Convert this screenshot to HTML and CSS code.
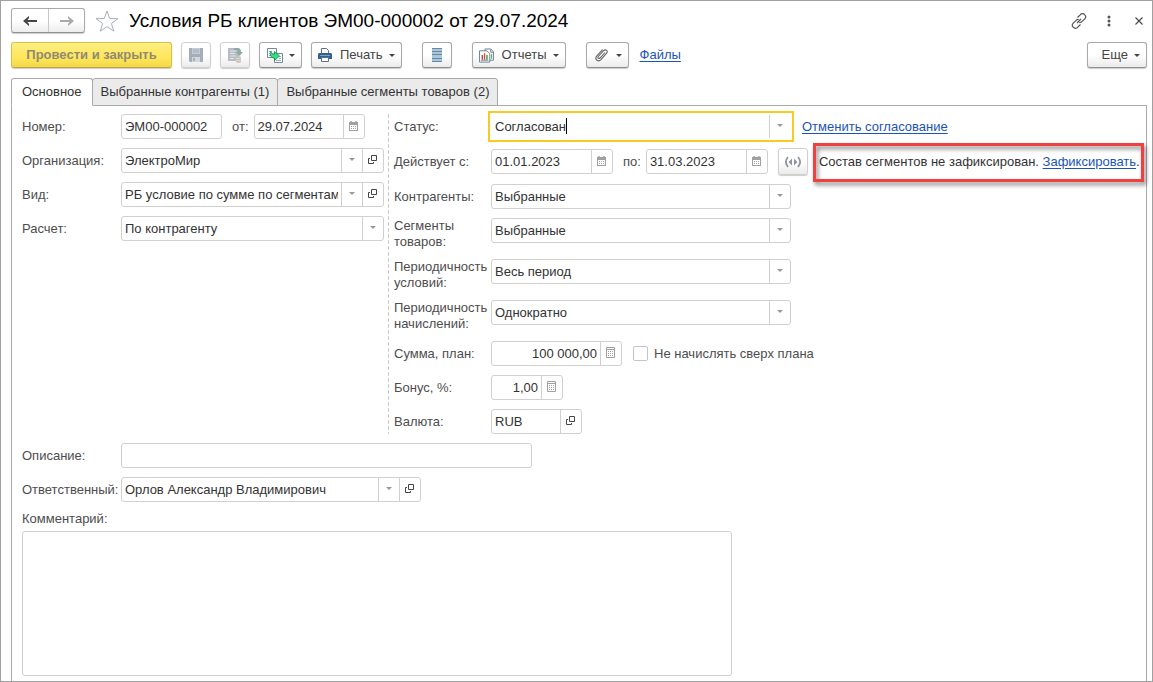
FILE: index.html
```
<!DOCTYPE html>
<html lang="ru">

<head>
    <meta charset="UTF-8">
    <meta name="viewport" content="width=device-width, initial-scale=1.0">
    <title>Условия РБ клиентов ЭМ00-000002 от 29.07.2024</title>
    <link rel="stylesheet" href="styles.css">
</head>

<body>
    <!-- общие иконки полей -->
    <svg class="sprite" aria-hidden="true">
        <symbol id="i-calendar" viewBox="0 0 9 10">
            <path d="M0 1h9v9H0z" fill="#a0a0a0" />
            <path d="M1 4h7v5H1z" fill="#fff" />
            <path d="M2 0v2M7 0v2" stroke="#a0a0a0" stroke-width="1.4" />
            <path d="M2 5.5h5M2 7.5h5" stroke="#a0a0a0" stroke-dasharray="1 1" />
        </symbol>
        <symbol id="i-calc" viewBox="0 0 9 11">
            <path d="M.5.5h8v10h-8z" fill="#fff" stroke="#a0a0a0" />
            <path d="M1 2.5h7" stroke="#a0a0a0" />
            <path d="M2 4.5h5M2 6.5h5M2 8.5h5" stroke="#a0a0a0" stroke-dasharray="1 1" />
        </symbol>
        <symbol id="i-open" viewBox="0 0 9 9">
            <path d="M3.5.5h5v5h-5zM2 3.5H.5v5h5V7" fill="none" stroke="#444" />
        </symbol>
    </svg>

    <div class="window">
        <header class="titlebar">
            <div class="nav">
                <button type="button" aria-label="Назад"><svg width="14" height="10" viewBox="0 0 14 10"><path d="M6 0v2L4.500 4H14v2H4.500L6 8v2L0 5z" fill="#444" /></svg></button>
                <button type="button" aria-label="Вперед" disabled><svg width="14" height="10" viewBox="0 0 14 10"><path d="M8 0v2l1.500 2H0v2h9.500L8 8v2l6-5z" fill="#aaa" /></svg></button>
            </div>
            <button type="button" class="plain star" aria-label="Избранное"><svg width="24" height="22" viewBox="0 0 24 22"><path d="M12 1l2.700 7.500 8.300.2-6.600 4.800 2.400 7.700L12 16.600l-6.800 4.600 2.400-7.700L1 8.700l8.300-.2z" fill="#fff" stroke="#a9b0ba" /></svg></button>
            <h1>Условия РБ клиентов ЭМ00-000002 от 29.07.2024</h1>
            <div class="tools">
                <button type="button" class="plain" aria-label="Получить ссылку"><svg width="16" height="16" viewBox="0 0 16 16" fill="none" stroke="#555" stroke-width="1.200"><path d="M6.500 4.500l2.700-2.700a2.900 2.900 0 0 1 4.600 0 2.900 2.900 0 0 1 0 4l-2.900 2.900a2.900 2.900 0 0 1-2.600.8M9.500 11.500l-2.700 2.700a2.900 2.900 0 0 1-4.600 0 2.900 2.900 0 0 1 0-4l2.900-2.900a2.900 2.900 0 0 1 2.600-.8M6 10l4-4" /></svg></button>
                <button type="button" class="plain" aria-label="Меню"><svg width="4" height="12" viewBox="0 0 4 12" fill="#555"><circle cx="2" cy="2" r="1.500" /><circle cx="2" cy="6" r="1.500" /><circle cx="2" cy="10" r="1.500" /></svg></button>
                <button type="button" class="plain" aria-label="Закрыть"><svg width="8" height="8" viewBox="0 0 8 8"><path d="M.5.5l7 7M7.500.5l-7 7" stroke="#444" stroke-width="1.100" /></svg></button>
            </div>
        </header>

        <div class="toolbar">
            <button type="button" class="btn btn-main">Провести и закрыть</button>
            <button type="button" class="btn btn-icon" aria-label="Записать" disabled><svg width="14" height="14" viewBox="0 0 14 14"><path d="M0 0h14v14H1l-1-1z" fill="#a4adb8" /><path d="M3 0h8v6H3z" fill="#c4ccd4" /><path d="M4 2h6M4 4h6" stroke="#a4adb8" /><path d="M3 9h8v5H3z" fill="#d3d8dd" /><path d="M4 10h2v3H4z" fill="#a4adb8" /></svg></button>
            <button type="button" class="btn btn-icon" aria-label="Провести" disabled><svg width="16" height="17" viewBox="0 0 16 17"><path d="M1 1h11v13H1z" fill="#b5bcc3" /><path d="M3 4h6M3 6.500h5M3 9h6M3 11.500h4" stroke="#e2e5e8" /><path d="M7 1h3c3 0 4 1 4 4h2l-3.500 4L9 5h2c0-2-1-2-4-2z" fill="#8faaa0" /><path d="M9 10c0-1 5-1 5 0v5c0 1-5 1-5 0z" fill="#c9c3b4" /><path d="M9 11.500h5M9 13.500h5" stroke="#ddd8cc" /></svg></button>
            <button type="button" class="btn" aria-label="Создать на основании"><svg width="17" height="17" viewBox="0 0 17 17"><path d="M1.500 1.500h9v9h-9z" fill="#fff" stroke="#74879b" /><path d="M3 4.500h2M3 6.500h1M3 8.500h2" stroke="#9aa8b6" /><path d="M8.500 6.500h8v9h-8z" fill="#fff" stroke="#74879b" /><path d="M10 13.500h5M13 11.500h2M13 9.500h2" stroke="#9aa8b6" /><path d="M5 4c0 2 1 3 3.500 3V4.500l5 4.500-5 4.500V11C5 11 3.500 8 5 4z" fill="#2fe07f" stroke="#13864a" stroke-width=".8" /></svg><i class="caret"></i></button>
            <button type="button" class="btn"><svg width="14" height="14" viewBox="0 0 14 14"><path d="M3.500.5h5l2 2V6h-7z" fill="#fff" stroke="#5d7183" /><path d="M1 5h12l1 1v5H0V6z" fill="#32628f" /><path d="M2 7.500h10" stroke="#7ea3c4" /><path d="M3.500 9.500h7v4h-7z" fill="#fff" stroke="#5d7183" /></svg><span>Печать</span><i class="caret"></i></button>
            <button type="button" class="btn btn-icon group" aria-label="Движения документа"><svg width="10" height="14" viewBox="0 0 10 14"><path d="M0 0h10v14H0z" fill="#a9c6da" /><path d="M0 .5h10M0 3.500h10M0 6.500h10M0 10.500h10M0 13.500h10" stroke="#6688a3" /></svg></button>
            <button type="button" class="btn group"><svg width="15" height="15" viewBox="0 0 16 15"><path d="M6.500.5h6l3 3v9h-9z" fill="#fff" stroke="#687d90" /><path d="M12.500 1v3h3" fill="none" stroke="#687d90" /><path d="M13.500 6v5" stroke="#2aa04a" /><path d="M.5 2.500h8l3 3v9H.5z" fill="#fff" stroke="#687d90" /><path d="M3.500 7v5" stroke="#d8412f" stroke-width="1.500" /><path d="M6 5v7" stroke="#d8412f" stroke-width="1.300" /><path d="M8.500 7v5" stroke="#2aa04a" stroke-width="1.500" /><path d="M2 12.500h8" stroke="#687d90" /></svg><span>Отчеты</span><i class="caret"></i></button>
            <button type="button" class="btn group" aria-label="Присоединенные файлы"><svg width="17" height="14" viewBox="0 0 13 14" fill="none" stroke="#666" stroke-width="1.100"><path d="M10 4.500l-5 5.500c-1.300 1.300-2.800-.2-1.700-1.500l5.300-5.800c2-2 4.800.2 3 2.500L6 11.700c-2.800 2.800-6.800-.2-4.300-3.500L7.500 1.700" /></svg><i class="caret"></i></button>
            <a href="#">Файлы</a>
            <button type="button" class="btn more"><span>Еще</span><i class="caret"></i></button>
        </div>

        <div class="tabs" role="tablist">
            <button type="button" role="tab" class="tab active" aria-selected="true">Основное</button>
            <button type="button" role="tab" class="tab">Выбранные контрагенты (1)</button>
            <button type="button" role="tab" class="tab">Выбранные сегменты товаров (2)</button>
        </div>

        <main class="panel">
            <div class="columns">
                <div class="col col-left">
                    <div class="row">
                        <label for="number">Номер:</label>
                        <div class="field w-number"><input type="text" id="number" value="ЭМ00-000002"></div>
                        <label class="inline" for="date">от:</label>
                        <div class="field w-date"><input type="text" id="date" value="29.07.2024"><button type="button" class="cell" aria-label="Выбрать дату"><svg width="9" height="10"><use href="#i-calendar" /></svg></button></div>
                    </div>
                    <div class="row">
                        <label for="org">Организация:</label>
                        <div class="field grow"><select id="org"><option>ЭлектроМир</option></select><span class="cell drop"></span><button type="button" class="cell" aria-label="Открыть"><svg width="9" height="9"><use href="#i-open" /></svg></button></div>
                    </div>
                    <div class="row">
                        <label for="kind">Вид:</label>
                        <div class="field grow"><select id="kind"><option>РБ условие по сумме по сегментам</option></select><span class="cell drop"></span><button type="button" class="cell" aria-label="Открыть"><svg width="9" height="9"><use href="#i-open" /></svg></button></div>
                    </div>
                    <div class="row">
                        <label for="calc">Расчет:</label>
                        <div class="field grow"><select id="calc"><option>По контрагенту</option></select><span class="cell drop"></span></div>
                    </div>
                </div>

                <div class="col col-right">
                    <div class="row">
                        <label for="status">Статус:</label>
                        <div class="field w-select focused"><select id="status"><option>Согласован</option></select><span class="text-cursor"></span><span class="cell drop"></span></div>
                        <a class="after" href="#">Отменить согласование</a>
                    </div>
                    <div class="row row-period">
                        <label for="from">Действует с:</label>
                        <div class="field w-period"><input type="text" id="from" value="01.01.2023"><button type="button" class="cell" aria-label="Выбрать дату"><svg width="9" height="10"><use href="#i-calendar" /></svg></button></div>
                        <label class="inline" for="to">по:</label>
                        <div class="field w-period"><input type="text" id="to" value="31.03.2023"><button type="button" class="cell" aria-label="Выбрать дату"><svg width="9" height="10"><use href="#i-calendar" /></svg></button></div>
                        <button type="button" class="btn btn-period" aria-label="Выбрать период"><svg width="16" height="12" viewBox="0 0 16 12"><path d="M3 1c-2.500 3-2.500 7 0 10M13 1c2.500 3 2.500 7 0 10" fill="none" stroke="#8e979f" stroke-width="1.800" /><path d="M7 2.500v7L3.500 6zM9 2.500v7L12.500 6z" fill="#8e979f" /></svg></button>
                        <p class="notice">Состав сегментов не зафиксирован. <a href="#">Зафиксировать</a>.</p>
                    </div>
                    <div class="row">
                        <label for="partners">Контрагенты:</label>
                        <div class="field w-select"><select id="partners"><option>Выбранные</option></select><span class="cell drop"></span></div>
                    </div>
                    <div class="row">
                        <label for="segments">Сегменты товаров:</label>
                        <div class="field w-select"><select id="segments"><option>Выбранные</option></select><span class="cell drop"></span></div>
                    </div>
                    <div class="row">
                        <label for="terms">Периодичность условий:</label>
                        <div class="field w-select"><select id="terms"><option>Весь период</option></select><span class="cell drop"></span></div>
                    </div>
                    <div class="row">
                        <label for="accruals">Периодичность начислений:</label>
                        <div class="field w-select"><select id="accruals"><option>Однократно</option></select><span class="cell drop"></span></div>
                    </div>
                    <div class="row">
                        <label for="sum">Сумма, план:</label>
                        <div class="field w-sum"><input type="text" class="num" id="sum" value="100 000,00"><button type="button" class="cell" aria-label="Калькулятор"><svg width="9" height="11"><use href="#i-calc" /></svg></button></div>
                        <label class="check"><input type="checkbox">Не начислять сверх плана</label>
                    </div>
                    <div class="row">
                        <label for="bonus">Бонус, %:</label>
                        <div class="field w-bonus"><input type="text" class="num" id="bonus" value="1,00"><button type="button" class="cell" aria-label="Калькулятор"><svg width="9" height="11"><use href="#i-calc" /></svg></button></div>
                    </div>
                    <div class="row">
                        <label for="currency">Валюта:</label>
                        <div class="field w-currency"><input type="text" id="currency" value="RUB"><button type="button" class="cell" aria-label="Открыть"><svg width="9" height="9"><use href="#i-open" /></svg></button></div>
                    </div>
                </div>
            </div>

            <div class="row">
                <label for="description">Описание:</label>
                <div class="field w-description"><input type="text" id="description"></div>
            </div>
            <div class="row">
                <label for="manager">Ответственный:</label>
                <div class="field w-select"><select id="manager"><option>Орлов Александр Владимирович</option></select><span class="cell drop"></span><button type="button" class="cell" aria-label="Открыть"><svg width="9" height="9"><use href="#i-open" /></svg></button></div>
            </div>
            <div class="comment">
                <label for="comment">Комментарий:</label>
                <textarea id="comment"></textarea>
            </div>
        </main>
    </div>
</body>

</html>
```
FILE: styles.css
```
* {
    box-sizing: border-box;
}

body {
    margin: 0;
    background: #fff;
    color: #333;
    font-family: "Liberation Sans", Arial, sans-serif;
    font-size: 13px;
    line-height: 16px;
}

button,
input,
select,
textarea {
    font: inherit;
    color: inherit;
    margin: 0;
    padding: 0;
    border: 0;
    outline: none;
    background: none;
}

svg {
    display: block;
    flex: none;
}

a {
    color: #1a54b8;
    text-underline-offset: 2px;
}

.sprite {
    display: none;
}

.window {
    display: flex;
    flex-direction: column;
    min-height: 100vh;
    padding: 7px 5px 0 10px;
    border: 1px solid #a0a0a0;
}

/* заголовок */
.titlebar {
    display: flex;
    align-items: center;
    height: 25px;
}

.titlebar h1 {
    flex: 1;
    margin: 0;
    font-size: 19px;
    line-height: 24px;
    font-weight: normal;
    color: #000;
    white-space: nowrap;
}

.nav {
    display: flex;
    height: 25px;
    border: 1px solid #a9a9a9;
    border-bottom-color: #8f8f8f;
    border-radius: 3px;
    background: linear-gradient(#fff 50%, #ededed);
    box-shadow: 0 1px 1px #ccc;
}

.nav button {
    display: flex;
    align-items: center;
    justify-content: center;
    width: 36px;
}

.nav button + button {
    border-left: 1px solid #c8c8c8;
}

.plain {
    display: flex;
    align-items: center;
    justify-content: center;
}

.star {
    margin: 0 10px;
}

.tools {
    display: flex;
    align-items: center;
    gap: 14px;
}

.tools button {
    width: 16px;
}

/* командная панель */
.toolbar {
    display: flex;
    align-items: center;
    gap: 9px;
    margin-top: 9px;
}

.toolbar a {
    margin-left: 2px;
}

.btn {
    display: flex;
    align-items: center;
    justify-content: center;
    gap: 6px;
    height: 26px;
    padding: 0 6px;
    border: 1px solid #a9a9a9;
    border-bottom-color: #8f8f8f;
    border-radius: 3px;
    background: linear-gradient(#fff 50%, #ebebeb);
    box-shadow: 0 1px 1px #ccc;
    color: #444;
    white-space: nowrap;
}

.btn span {
    margin-left: 2px;
}

.btn-main {
    width: 161px;
    border-color: #d8c04a;
    border-bottom-color: #b9a648;
    background: linear-gradient(#ffee82, #ffe65c 60%, #f3d948);
    color: #8f8b72;
    font-weight: bold;
}

.btn-icon {
    width: 30px;
}

.btn:disabled {
    border-color: #cfcfcf;
}

.group {
    margin-left: 11px;
}

.more {
    margin-left: auto;
    padding-left: 12px;
}

.caret {
    border: 3px solid transparent;
    border-top-color: #444;
    border-bottom: 0;
}

/* вкладки */
.tabs {
    display: flex;
    margin-top: 10px;
}

.tab {
    height: 28px;
    margin-left: -1px;
    padding: 0 8px;
    border: 1px solid #a9a9a9;
    border-radius: 3px 3px 0 0;
    background: #ebebeb;
}

.tab.active {
    position: relative;
    margin-left: 0;
    padding: 0 10px;
    border-bottom-color: #fff;
    background: #fff;
}

/* форма */
.panel {
    display: flex;
    flex: 1;
    flex-direction: column;
    gap: 9px;
    margin-top: -1px;
    padding: 8px 0 5px 10px;
    border: 1px solid #a9a9a9;
    border-bottom: 0;
}

.columns {
    display: flex;
    gap: 4px;
}

.col {
    display: flex;
    flex-direction: column;
    gap: 9px;
}

.col-left {
    flex: none;
    width: 362px;
}

.col-right {
    flex: 1;
    padding-left: 6px;
    background: repeating-linear-gradient(#ccc 0 4px, #fff 4px 6px) left top / 1px 100% no-repeat;
}

.row {
    display: flex;
    align-items: flex-start;
}

.row-period {
    align-items: center;
}

.row label {
    flex: none;
    align-self: center;
    width: 99px;
    color: #4d4d4d;
}

.col-right .row label {
    width: 97px;
}

.row label.inline,
.col-right .row label.inline {
    width: auto;
    margin: 0 5px 0 10px;
}

.field {
    display: flex;
    flex: none;
    height: 25px;
    border: 1px solid #d0d0d0;
    border-radius: 3px;
    background: #fff;
}

.field input,
.field select {
    flex: 1;
    min-width: 0;
    padding: 0 3px;
    appearance: none;
}

.field .num {
    text-align: right;
}

.grow {
    flex: 1;
    min-width: 0;
}

.w-number {
    width: 101px;
}

.w-date {
    width: 111px;
}

.w-period {
    width: 122px;
}

.w-select {
    width: 300px;
}

.w-sum {
    width: 131px;
}

.w-bonus {
    width: 72px;
}

.w-currency {
    width: 91px;
}

.w-description {
    width: 411px;
}

.cell {
    display: flex;
    flex: none;
    align-items: center;
    justify-content: center;
    width: 21px;
    padding: 0 1px 2px 0;
    border-left: 1px solid #d0d0d0;
}

.drop::before {
    content: "";
    border: 3px solid transparent;
    border-top-color: #999;
    border-bottom: 0;
}

.field.focused {
    border-color: #fff;
    border-radius: 0;
    outline: 2px solid #f9ca24;
    outline-offset: 1px;
}

.focused select {
    flex: none;
    padding-right: 0;
}

.focused .cell {
    margin-left: auto;
}

.text-cursor {
    width: 1px;
    height: 16px;
    margin-top: 3px;
    background: #000;
}

.after {
    align-self: center;
    margin-left: 11px;
}

.btn-period {
    width: 30px;
    height: 27px;
    margin-left: 10px;
    border-color: #cfcfcf;
}

.notice {
    position: relative;
    margin: 0 0 0 11px;
    white-space: nowrap;
}

/* рамка поверх строки */
.notice::after {
    content: "";
    position: absolute;
    inset: -11px -4px -12px -6px;
    border: 3px solid #f04040;
    filter: drop-shadow(2px 3px 2px rgba(0, 0, 0, 0.5));
    pointer-events: none;
}

.row label.check,
.col-right .row label.check {
    display: flex;
    align-items: center;
    gap: 6px;
    width: auto;
    margin-left: 11px;
}

.check input {
    width: 15px;
    height: 15px;
    border: 1px solid #c4c4c4;
    border-radius: 2px;
    appearance: none;
}

.comment {
    display: flex;
    flex: 1;
    flex-direction: column;
    gap: 4px;
    color: #4d4d4d;
}

.comment textarea {
    flex: 1;
    width: 710px;
    min-height: 144px;
    border: 1px solid #d0d0d0;
    border-radius: 3px;
    resize: none;
}
```
